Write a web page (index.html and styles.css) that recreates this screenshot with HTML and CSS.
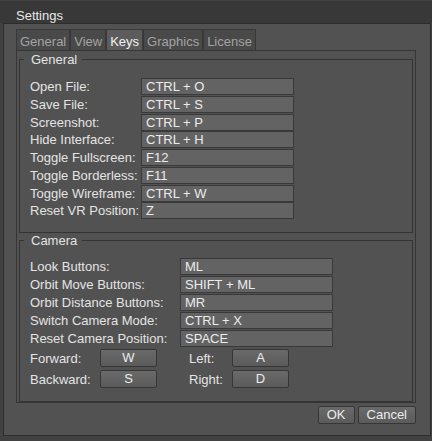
FILE: index.html
```html
<!DOCTYPE html>
<html lang="en">
<head>
<meta charset="utf-8">
<title>Settings</title>
<link rel="stylesheet" href="styles.css">
</head>
<body>
<div class="window">
  <header class="titlebar">Settings</header>
  <main class="panel">
    <nav class="tabs">
      <span class="tab">General</span>
      <span class="tab">View</span>
      <span class="tab is-active">Keys</span>
      <span class="tab">Graphics</span>
      <span class="tab">License</span>
    </nav>
    <section class="pane">
      <fieldset class="group group-general">
        <legend class="group-title">General</legend>
        <div class="binding-grid general-grid">
          <span class="binding-label">Open File:</span><span class="binding-field">CTRL + O</span>
          <span class="binding-label">Save File:</span><span class="binding-field">CTRL + S</span>
          <span class="binding-label">Screenshot:</span><span class="binding-field">CTRL + P</span>
          <span class="binding-label">Hide Interface:</span><span class="binding-field">CTRL + H</span>
          <span class="binding-label">Toggle Fullscreen:</span><span class="binding-field">F12</span>
          <span class="binding-label">Toggle Borderless:</span><span class="binding-field">F11</span>
          <span class="binding-label">Toggle Wireframe:</span><span class="binding-field">CTRL + W</span>
          <span class="binding-label">Reset VR Position:</span><span class="binding-field">Z</span>
        </div>
      </fieldset>
      <fieldset class="group group-camera">
        <legend class="group-title">Camera</legend>
        <div class="binding-grid camera-grid">
          <span class="binding-label">Look Buttons:</span><span class="binding-field">ML</span>
          <span class="binding-label">Orbit Move Buttons:</span><span class="binding-field">SHIFT + ML</span>
          <span class="binding-label">Orbit Distance Buttons:</span><span class="binding-field">MR</span>
          <span class="binding-label">Switch Camera Mode:</span><span class="binding-field">CTRL + X</span>
          <span class="binding-label">Reset Camera Position:</span><span class="binding-field">SPACE</span>
        </div>
        <div class="move-grid">
          <span class="binding-label">Forward:</span><button class="btn key-btn">W</button>
          <span class="binding-label">Left:</span><button class="btn key-btn">A</button>
          <span class="binding-label">Backward:</span><button class="btn key-btn">S</button>
          <span class="binding-label">Right:</span><button class="btn key-btn">D</button>
        </div>
      </fieldset>
    </section>
    <div class="actions">
      <button class="btn action-btn">OK</button>
      <button class="btn action-btn">Cancel</button>
    </div>
  </main>
</div>
</body>
</html>
```

FILE: styles.css
```css
* { box-sizing: border-box; }

html, body { margin: 0; padding: 0; }

body {
  width: 432px;
  height: 441px;
  overflow: hidden;
  background: #3f3f3f;
  font-family: "Liberation Sans", Arial, sans-serif;
  font-size: 13px;
  color: #e4e4e4;
}

.window {
  width: 432px;
  height: 441px;
  display: flex;
  flex-direction: column;
  background: #424242;
}

.titlebar {
  height: 23px;
  padding: 6px 0 0 16px;
  line-height: 17px;
  background: #383838;
  border-top: 1px solid #444444;
  color: #e8e8e8;
}

.panel {
  margin: 0 1px 0 3px;
  height: 413px;
  border: 1px solid #2d2d2d;
  background: #525252;
  padding: 5px 14px 11px 12px;
  display: flex;
  flex-direction: column;
}

.tabs {
  display: flex;
  height: 21px;
}

.tab {
  height: 21px;
  padding: 3px 3px 0;
  line-height: 17px;
  border: 1px solid #393939;
  border-bottom: none;
  background: #494949;
  color: #a4a4a4;
  white-space: nowrap;
}

.tab.is-active {
  background: #5c5c5c;
  color: #f2f2f2;
}

.pane {
  border: 1px solid #363636;
  padding: 1px 2px 0;
}

.group {
  margin: 0;
  min-width: 0;
  border: 1px solid #343434;
  padding: 11px 10px 12.75px;
}

.group-camera {
  padding: 10px 10px 12.6px;
}

.group-title {
  margin-left: -6px;
  padding: 0 5px 0 7px;
  line-height: 15px;
  color: #e4e4e4;
}

.binding-grid {
  display: grid;
  grid-auto-rows: 17px;
}

.general-grid {
  grid-template-columns: 111px 153px;
  row-gap: 0.75px;
}

.camera-grid {
  grid-template-columns: 150px 153px;
  row-gap: 1px;
}

.binding-label {
  line-height: 17px;
  white-space: nowrap;
  color: #e4e4e4;
}

.binding-field {
  border: 1px solid #393939;
  background: #636363;
  padding-left: 4px;
  line-height: 15px;
  color: #ececec;
  white-space: nowrap;
}

.move-grid {
  margin-top: 2px;
  display: grid;
  grid-template-columns: 70px 89px 43px 57px;
  grid-auto-rows: 18px;
  row-gap: 3.4px;
  align-items: center;
}

.btn {
  height: 18px;
  margin: 0;
  border: 1px solid #363636;
  border-radius: 2px;
  background: linear-gradient(#6a6a6a, #5b5b5b);
  color: #ececec;
  font: inherit;
  line-height: 16px;
  padding: 0 8px;
  text-align: center;
}

.key-btn {
  width: 57px;
  justify-self: start;
}

.actions {
  display: flex;
  justify-content: flex-end;
  gap: 3px;
  margin-top: 3px;
}
```
